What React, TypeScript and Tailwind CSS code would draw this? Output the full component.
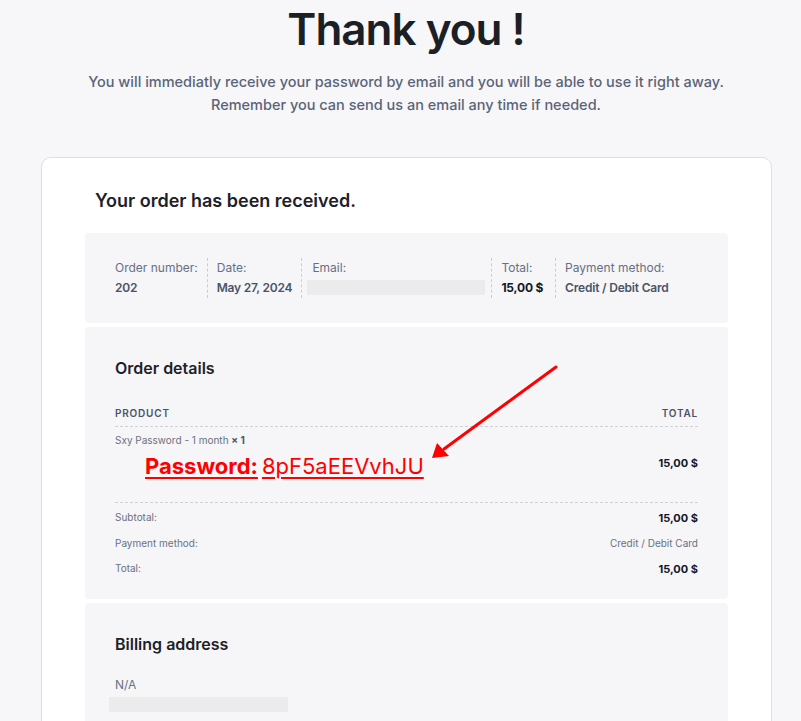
import React from "react";

const Sep = ({ ml = 9 }: { ml?: number }) => (
  <div
    className={`mr-[9px] w-0 self-stretch border-l border-dashed border-[#c9ccd2] ${
      ml === 6 ? "ml-[6px]" : ml === 12 ? "ml-[12px]" : "ml-[9px]"
    }`}
  />
);

const Meta = ({ label, children }: { label: string; children: React.ReactNode }) => (
  <div className="flex flex-col">
    <span className="text-[12px] leading-[20px] text-[#667085]">{label}</span>
    <span className="text-[12px] leading-[20px] font-semibold tracking-[-0.2px] text-[#4a5468]">{children}</span>
  </div>
);

const Row = ({ label, value, bold }: { label: string; value: string; bold?: boolean }) => (
  <div className="flex justify-between items-center h-[25.5px] text-[10px]">
    <span className="text-[#6b7280]">{label}</span>
    <span className={bold ? "font-bold text-[#111827] text-[11px]" : "text-[#6b7280]"}>{value}</span>
  </div>
);

export default function App() {
  return (
    <div
      className="relative min-h-[721px] bg-[#f7f6f8] overflow-hidden"
      style={{ fontFamily: "Inter, 'Noto Sans', sans-serif" }}
    >
      <div className="flex flex-col items-center pt-[2px] pl-[11px]">
        <h1 className="text-[44px] leading-[54px] font-semibold text-[#1b1f26] tracking-[-1px]">Thank you !</h1>
        <div className="mt-[14px] text-center text-[14.5px] leading-[23px] font-medium text-[#5a6478]">
          <p>You will immediatly receive your password by email and you will be able to use it right away.</p>
          <p>Remember you can send us an email any time if needed.</p>
        </div>
      </div>

      <div className="mx-[41px] mt-[41px] w-[731px] rounded-t-[10px] border border-[#dfdfe3] bg-white px-[43px] pt-[30px]">
        <h2 className="pl-[10px] text-[18px] leading-[26px] font-semibold text-[#1d2129]">Your order has been received.</h2>

        <div className="mt-[19px] flex rounded-[4px] bg-[#f6f5f7] px-[30px] py-[25px]">
          <Meta label="Order number:">202</Meta>
          <Sep />
          <Meta label="Date:">May 27, 2024</Meta>
          <Sep />
          <div className="ml-[1px] flex flex-col">
            <span className="text-[12px] leading-[20px] text-[#667085]">Email:</span>
            <span className="-ml-[5px] mt-[2px] h-[15px] w-[178px] bg-[#ebebeb]" />
          </div>
          <Sep ml={6} />
          <div className="flex flex-col">
            <span className="text-[12px] leading-[20px] text-[#667085]">Total:</span>
            <span className="text-[12px] leading-[20px] font-bold tracking-[-0.2px] text-[#111827]">15,00 $</span>
          </div>
          <Sep ml={12} />
          <Meta label="Payment method:">Credit / Debit Card</Meta>
        </div>

        <div className="mt-[4px] rounded-[4px] bg-[#f6f5f7] px-[30px] pt-[29px] pb-[17px]">
          <h3 className="text-[16px] leading-[24px] font-semibold text-[#1d2129]">Order details</h3>
          <div className="mt-[26px] flex justify-between pb-[5px] text-[10px] font-semibold tracking-[0.8px] text-[#4a5468] border-b border-dashed border-[#cfd1d6]">
            <span>PRODUCT</span>
            <span>TOTAL</span>
          </div>
          <div className="flex justify-between pt-[5px] pb-[23px] border-b border-dashed border-[#cfd1d6]">
            <div>
              <div className="text-[10px] leading-[16px] text-[#6b7280]">
                Sxy Password - 1 month <span className="font-bold text-[#4a5468]">× 1</span>
              </div>
              <div className="mt-[5px] flex gap-[4px] pl-[30px] text-[22px] leading-[26px] text-[#ff0000]">
                <span className="font-bold underline underline-offset-[3px]">Password:</span>
                <span className="underline underline-offset-[3px]">8pF5aEEVvhJU</span>
              </div>
            </div>
            <span className="mt-[23px] text-[11px] font-bold text-[#111827]">15,00 $</span>
          </div>
          <div className="pt-[2px]">
            <Row label="Subtotal:" value="15,00 $" bold />
            <Row label="Payment method:" value="Credit / Debit Card" />
            <Row label="Total:" value="15,00 $" bold />
          </div>
        </div>

        <div className="mt-[4px] rounded-[4px] bg-[#f6f5f7] px-[30px] pt-[29px] pb-[30px]">
          <h3 className="text-[16px] leading-[24px] font-semibold text-[#1d2129]">Billing address</h3>
          <div className="mt-[20px] text-[12px] leading-[18px] text-[#6b7280]">N/A</div>
          <div className="-ml-[6px] mt-[3px] h-[15px] w-[179px] bg-[#ebebeb]" />
        </div>
      </div>

      <svg className="absolute left-0 top-0 pointer-events-none" width="801" height="721">
        <line x1="556" y1="367" x2="444" y2="449" stroke="#ff0000" strokeWidth="3" strokeLinecap="round" />
        <polygon points="432,458 437,443 449,456" fill="#ff0000" />
      </svg>
    </div>
  );
}
